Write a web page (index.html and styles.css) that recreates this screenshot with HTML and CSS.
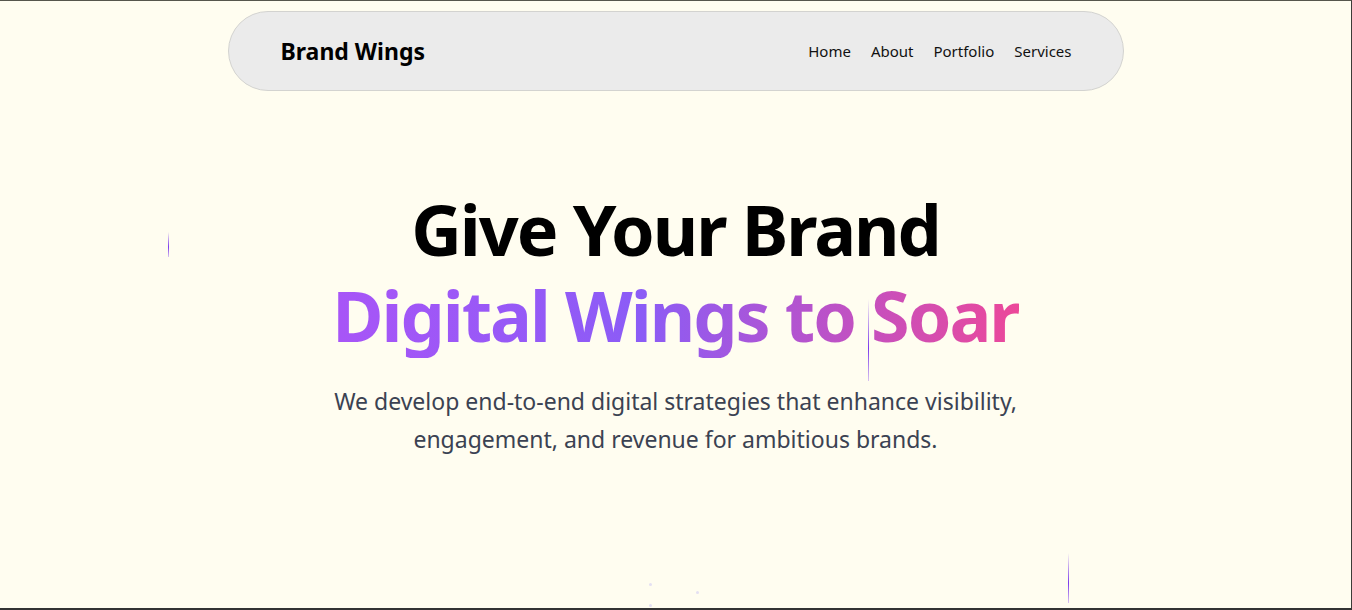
FILE: index.html
```html
<!DOCTYPE html>
<html lang="en">
<head>
<meta charset="utf-8">
<title>Brand Wings</title>
<link rel="stylesheet" href="styles.css">
</head>
<body>
<div class="page">
  <header class="nav-wrap">
    <nav class="nav">
      <a class="brand" href="#">Brand Wings</a>
      <ul class="links">
        <li><a href="#">Home</a></li>
        <li><a href="#">About</a></li>
        <li><a href="#">Portfolio</a></li>
        <li><a href="#">Services</a></li>
      </ul>
    </nav>
  </header>
  <main class="hero">
    <h1 class="title">
      <span class="line">Give Your Brand</span>
      <span class="line grad">Digital Wings to Soar</span>
    </h1>
    <p class="lead">We develop end-to-end digital strategies that enhance visibility, engagement, and revenue for ambitious brands.</p>
  </main>
  <span class="streak s1"></span>
  <span class="streak s2"></span>
  <span class="streak s3"></span>
  <span class="dot d1"></span>
  <span class="dot d2"></span>
  <span class="dot d3"></span>
</div>
</body>
</html>
```
FILE: styles.css
```css
* { box-sizing: border-box; }
html, body { margin: 0; padding: 0; }
body {
  background: #2b2b2b;
  font-family: "Segoe UI", "Noto Sans", "Open Sans", sans-serif;
}
.page {
  position: relative;
  height: 610px;
  overflow: hidden;
  background: #fffdf0;
  border-top: 1px solid #56564c;
  border-right: 1px solid #3c3c38;
  border-bottom: 2px solid #333;
}
.nav-wrap {
  display: flex;
  justify-content: center;
  padding-top: 10px;
}
.nav {
  width: 896px;
  height: 80px;
  display: flex;
  align-items: center;
  justify-content: space-between;
  padding: 0 51px 0 52px;
  background: #ebebeb;
  border: 1px solid #d3d3d0;
  border-radius: 40px;
}
.brand {
  color: #000;
  text-decoration: none;
  font-weight: 700;
  font-size: 23px;
}
.links {
  list-style: none;
  margin: 0;
  padding: 0;
  display: flex;
  gap: 20px;
}
.links a {
  color: #111;
  text-decoration: none;
  font-size: 15px;
}
.hero {
  display: flex;
  flex-direction: column;
  align-items: center;
  text-align: center;
  padding-top: 95px;
}
.title {
  margin: 0;
  font-size: 70px;
  line-height: 86px;
  font-weight: 700;
  color: #000;
  letter-spacing: -2px;
}
.line { display: block; }
.grad {
  background: linear-gradient(90deg, #a855f7 0%, #8b5cf6 45%, #ec4899 100%);
  -webkit-background-clip: text;
  background-clip: text;
  color: transparent;
}
.lead {
  margin: 24px 0 0;
  max-width: 700px;
  font-size: 23px;
  line-height: 38px;
  color: #3b4252;
}
.streak {
  position: absolute;
  width: 1px;
  background: linear-gradient(180deg, rgba(124,58,237,0) 0%, #7c3aed 60%, rgba(124,58,237,0.3) 100%);
}
.s1 { left: 168px; top: 231px; height: 25px; }
.s2 { left: 868px; top: 298px; height: 82px; }
.s3 { left: 1068px; top: 552px; height: 50px; }
.dot {
  position: absolute;
  width: 3px;
  height: 3px;
  border-radius: 50%;
  background: #e4e0f2;
}
.d1 { left: 649px; top: 582px; }
.d2 { left: 696px; top: 590px; }
.d3 { left: 649px; top: 603px; }
```
